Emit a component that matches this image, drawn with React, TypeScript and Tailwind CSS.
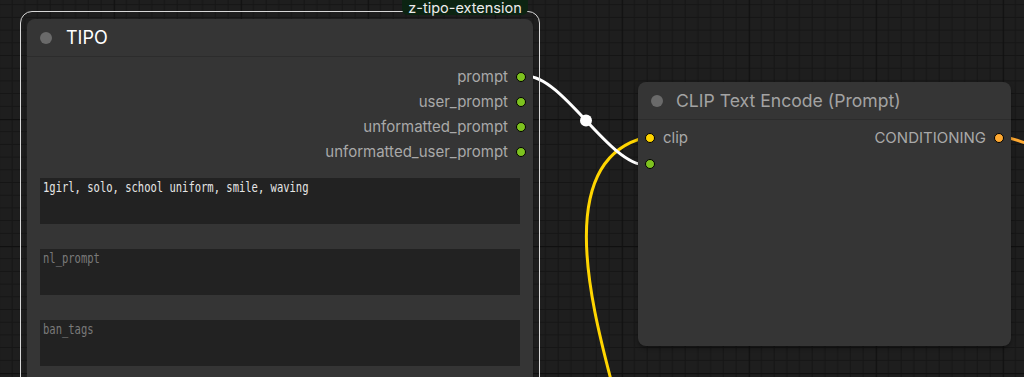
import React from "react";

const ui = { fontFamily: "Inter, 'Noto Sans', sans-serif" };
const mono = { fontFamily: "'DejaVu Sans Mono', 'Liberation Mono', monospace" };

function Grid() {
  const minor = [];
  for (let i = 1; i < 10; i++) {
    const p = i * 12.7;
    minor.push(<line key={"v" + i} x1={p} y1={0} x2={p} y2={127} stroke="#151515" strokeWidth={1} />);
    minor.push(<line key={"h" + i} x1={0} y1={p} x2={127} y2={p} stroke="#151515" strokeWidth={1} />);
  }
  return (
    <svg className="absolute inset-0" width={1024} height={377}>
      <defs>
        <pattern id="grid" width={127} height={127} patternUnits="userSpaceOnUse" patternTransform="translate(113.7 119)">
          <rect width={127} height={127} fill="#1e1e1e" />
          {minor}
          <line x1={0.5} y1={0} x2={0.5} y2={127} stroke="#101010" strokeWidth={1.5} />
          <line x1={0} y1={0.5} x2={127} y2={0.5} stroke="#101010" strokeWidth={1.5} />
        </pattern>
      </defs>
      <rect width={1024} height={377} fill="url(#grid)" />
    </svg>
  );
}

function Links() {
  return (
    <svg className="absolute inset-0 pointer-events-none" width={1024} height={377}>
      <path d="M 611 380 C 590 300, 555 160, 645 137.5" stroke="#ffd500" strokeWidth={3} fill="none" />
      <path d="M 526 76 C 563 76, 609 165, 646 165" stroke="#ffffff" strokeWidth={3} fill="none" />
      <circle cx={586} cy={120.5} r={6} fill="#ffffff" />
      <path d="M 1004 137.5 C 1012 137.5, 1018 141, 1026 143" stroke="#ffa931" strokeWidth={3} fill="none" />
    </svg>
  );
}

function Dot({ color }: { color: string }) {
  return <span className="block w-[10px] h-[10px] rounded-full border border-black shrink-0" style={{ backgroundColor: color }} />;
}

function TextBox({ text, placeholder }: { text: string; placeholder?: boolean }) {
  return (
    <div className="mx-[13px] h-[46px] bg-[#222222] pl-[3px] pt-[1px] overflow-hidden whitespace-nowrap leading-[16px]" style={mono}>
      <span className={"block w-max origin-left scale-x-[0.75] text-[14px] leading-[16px] " + (placeholder ? "text-[#7a7a7a]" : "text-[#e6e6e6]")}>
        {text}
      </span>
    </div>
  );
}

function TipoNode() {
  const outputs = ["prompt", "user_prompt", "unformatted_prompt", "unformatted_user_prompt"];
  return (
    <>
      <div className="absolute left-[20px] top-[11px] w-[520px] h-[420px] rounded-[12px] border-[1.5px] border-[#d8d8d8]" />
      <div className="absolute left-[27px] top-[19px] w-[506px] h-[400px] rounded-[8px] bg-[#353535] flex flex-col" style={ui}>
        <div className="h-[38px] flex items-center pl-[13px] border-b border-[#2c2c2c]">
          <span className="block w-[12px] h-[12px] rounded-full bg-[#6a6a6a]" />
          <span className="ml-[14px] text-[18px] text-white leading-none">TIPO</span>
        </div>
        <div className="flex flex-col pt-[7px] pr-[7px] mb-[14px]">
          {outputs.map((o) => (
            <div key={o} className="h-[25px] flex items-center justify-end gap-[8px]">
              <span className="text-[15px] text-[#a9a9a9] leading-none">{o}</span>
              <Dot color="#7ec21f" />
            </div>
          ))}
        </div>
        <div className="flex flex-col gap-[25px]">
          <TextBox text="1girl, solo, school uniform, smile, waving" />
          <TextBox text="nl_prompt" placeholder />
          <TextBox text="ban_tags" placeholder />
        </div>
      </div>
      <div className="absolute left-[402px] top-0 w-[126px] h-[15px] rounded-b-[6px] bg-[#0c2412] flex items-center justify-center" style={ui}>
        <span className="block text-[14.5px] leading-[15px] text-[#ececec]">z-tipo-extension</span>
      </div>
    </>
  );
}

function ClipNode() {
  return (
    <div className="absolute left-[638px] top-[82px] w-[373px] h-[264px] rounded-[8px] bg-[#353535] shadow-[0_2px_4px_rgba(0,0,0,0.4)] flex flex-col" style={ui}>
      <div className="h-[38px] flex items-center pl-[13px] border-b border-[#2c2c2c]">
        <span className="block w-[12px] h-[12px] rounded-full bg-[#6a6a6a]" />
        <span className="ml-[13px] text-[17.6px] text-[#a3a3a3] leading-none">CLIP Text Encode (Prompt)</span>
      </div>
      <div className="flex items-center justify-between h-[25px] mt-[5px] pl-[7px] pr-[7px]">
        <div className="flex items-center gap-[8px]">
          <Dot color="#ffd500" />
          <span className="text-[15px] text-[#a9a9a9] leading-none">clip</span>
        </div>
        <div className="flex items-center gap-[8px]">
          <span className="text-[15px] text-[#a9a9a9] leading-none">CONDITIONING</span>
          <Dot color="#ffa931" />
        </div>
      </div>
      <div className="flex items-center h-[28px] pl-[7px]">
        <Dot color="#7ec21f" />
      </div>
    </div>
  );
}

export default function App() {
  return (
    <div className="relative w-[1024px] h-[377px] overflow-hidden bg-[#1e1e1e]">
      <Grid />
      <Links />
      <TipoNode />
      <ClipNode />
    </div>
  );
}
